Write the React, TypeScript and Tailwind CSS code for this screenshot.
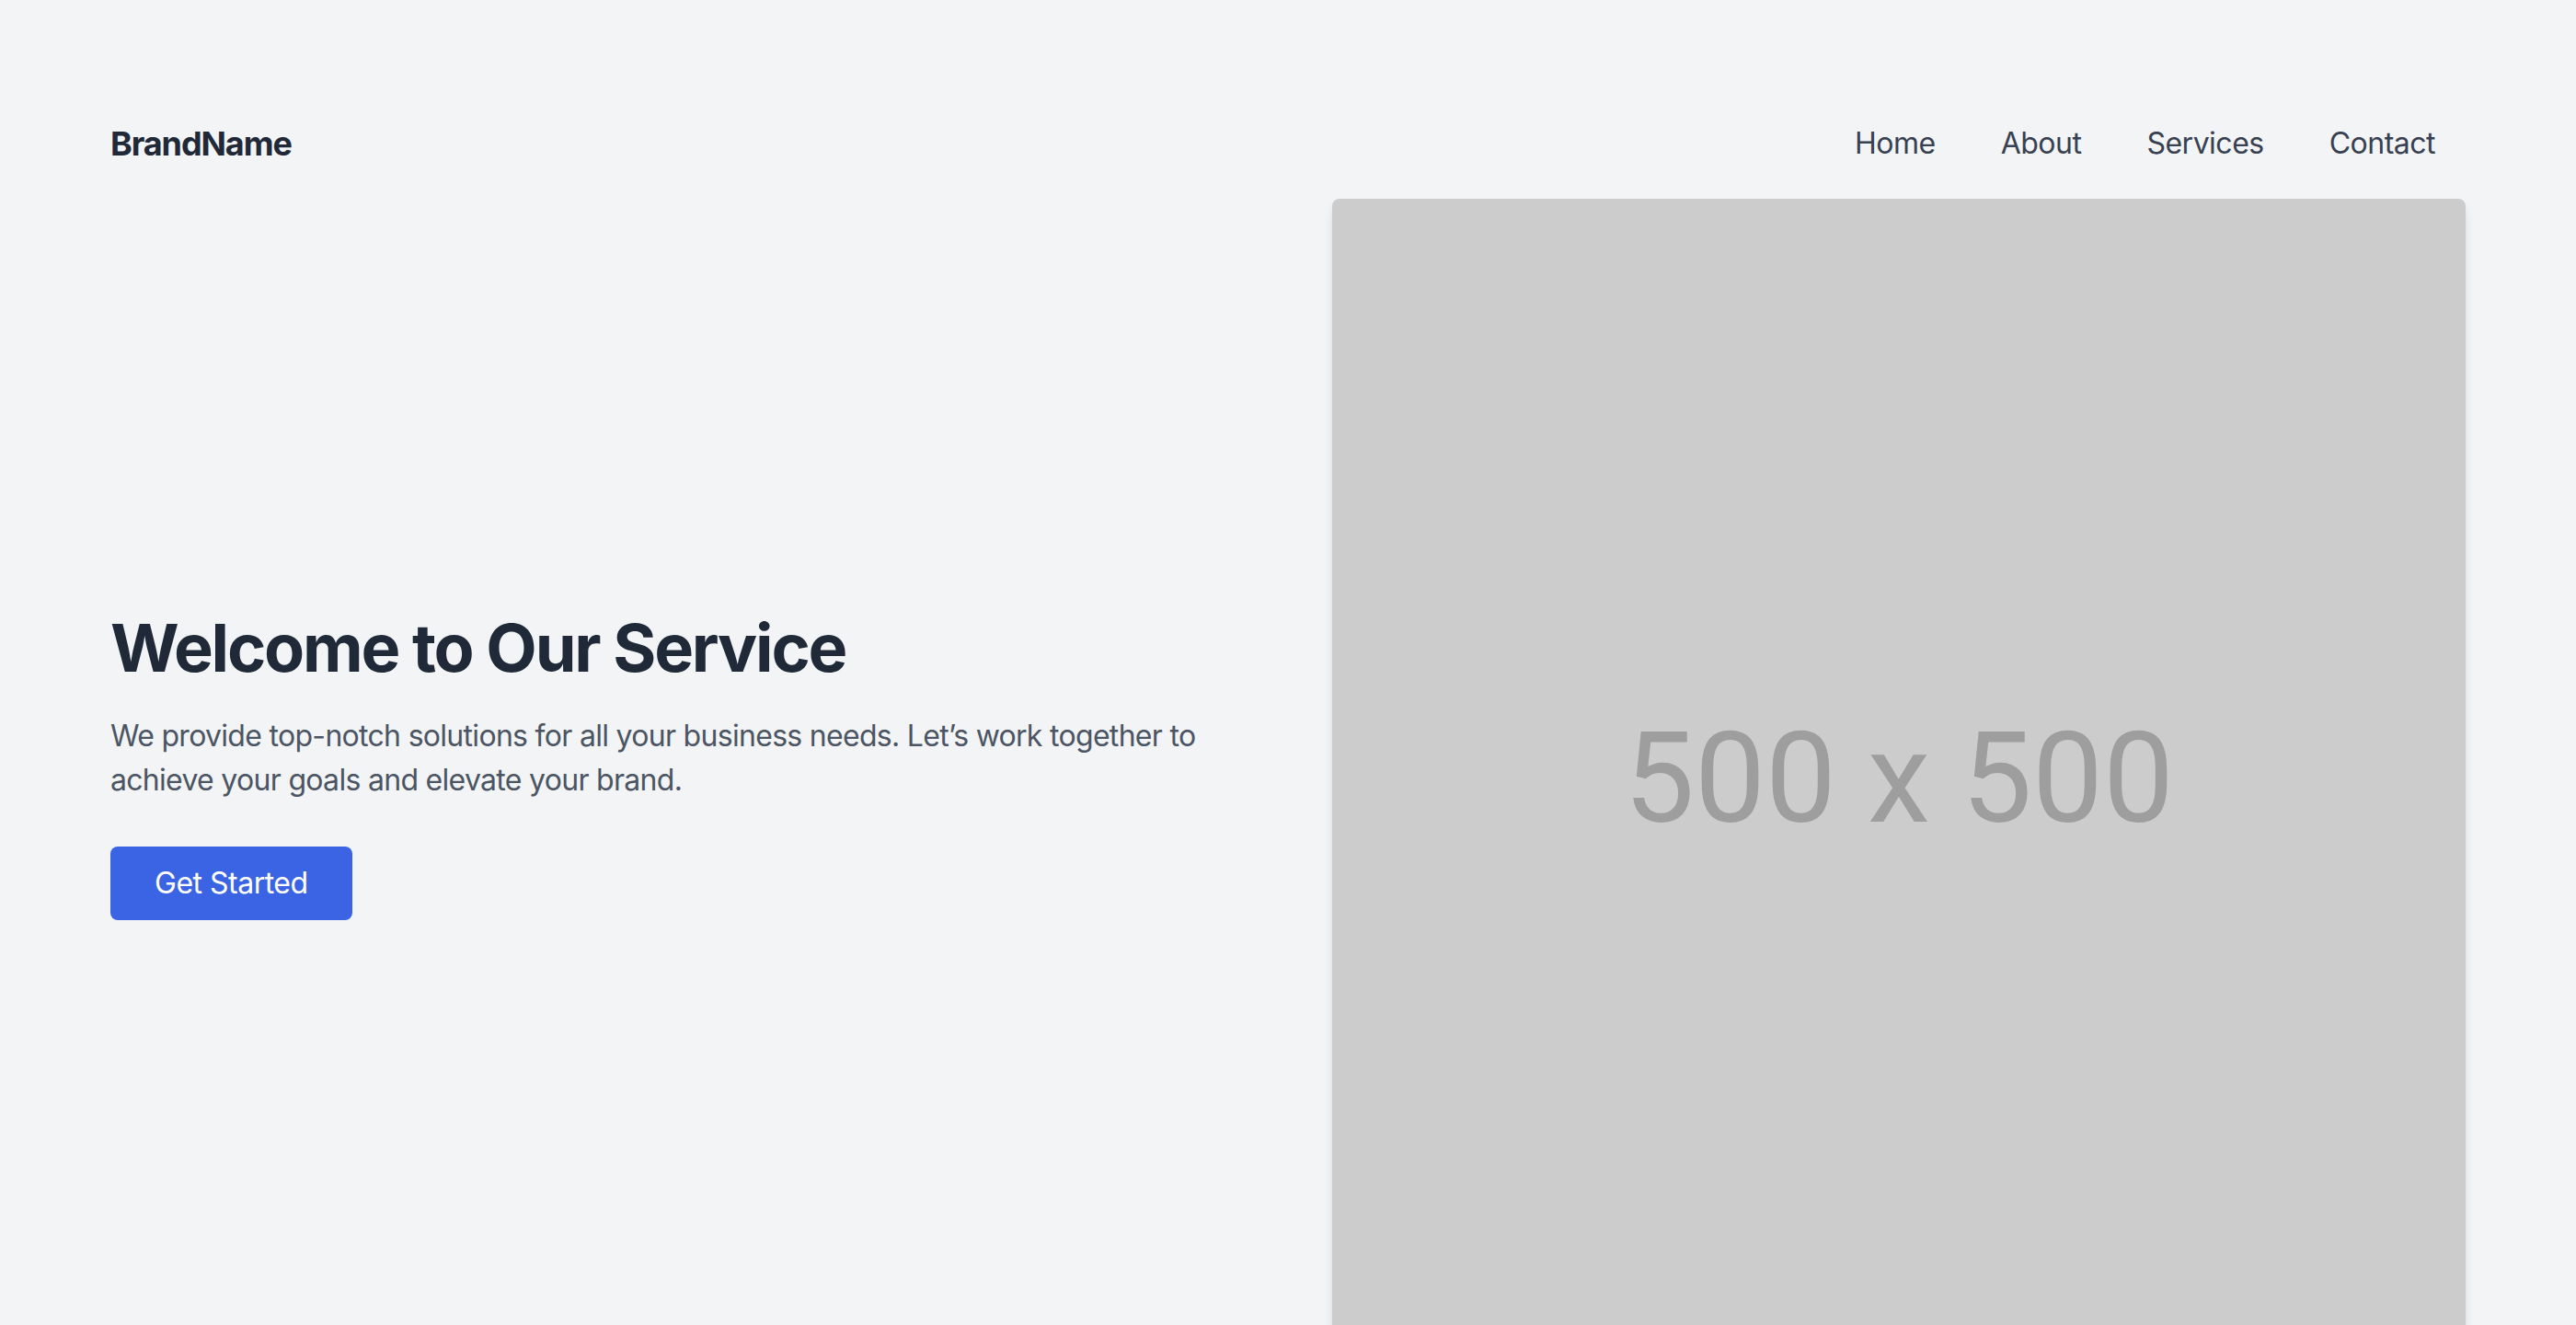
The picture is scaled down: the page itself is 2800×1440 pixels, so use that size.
import React from "react";

export default function App() {
  return (
    <div
      className="min-h-screen w-full bg-[#f3f4f6] overflow-hidden"
      style={{ fontFamily: "Inter, 'Noto Sans', sans-serif" }}
    >
      <div className="mx-auto max-w-[2560px] pt-[128px]">
        <header className="flex h-[56px] items-center justify-between">
          <div className="text-[36px] leading-[56px] font-bold tracking-[-1.1px] text-[#1f2937]">BrandName</div>
          <nav className="flex items-center gap-[71px] pr-[33px] text-[32px] leading-[48px] tracking-[-0.5px] text-[#374151]">
            <a href="#">Home</a>
            <a href="#">About</a>
            <a href="#">Services</a>
            <a href="#">Contact</a>
          </nav>
        </header>
        <main className="mt-[32px] grid grid-cols-2 items-center gap-[96px]">
          <div className="flex flex-col items-start">
            <h1 className="text-[72px] leading-[80px] font-bold tracking-[-2.2px] text-[#1f2937] mb-[32px]">
              Welcome to Our Service
            </h1>
            <p className="text-[32px] leading-[48px] tracking-[-0.7px] text-[#4b5563] mb-[48px]">
              We provide top-notch solutions for all your business needs. Let’s work together to achieve your goals and elevate your brand.
            </p>
            <button className="rounded-[8px] bg-[#3a64e4] px-[48px] py-[16px] text-[32px] leading-[48px] tracking-[-0.5px] text-white">
              Get Started
            </button>
          </div>
          <div className="h-[1232px] w-[1232px] rounded-[8px] bg-[#cccccc] shadow-[0_8px_14px_-3px_rgba(0,0,0,0.12),0_4px_8px_-4px_rgba(0,0,0,0.1)] flex items-center justify-center pt-[30px]">
            <span
              className="text-[137px] text-[#9e9e9e]"
              style={{ fontFamily: "Roboto, 'Liberation Sans', Arial, sans-serif" }}
            >
              500 x 500
            </span>
          </div>
        </main>
      </div>
    </div>
  );
}
